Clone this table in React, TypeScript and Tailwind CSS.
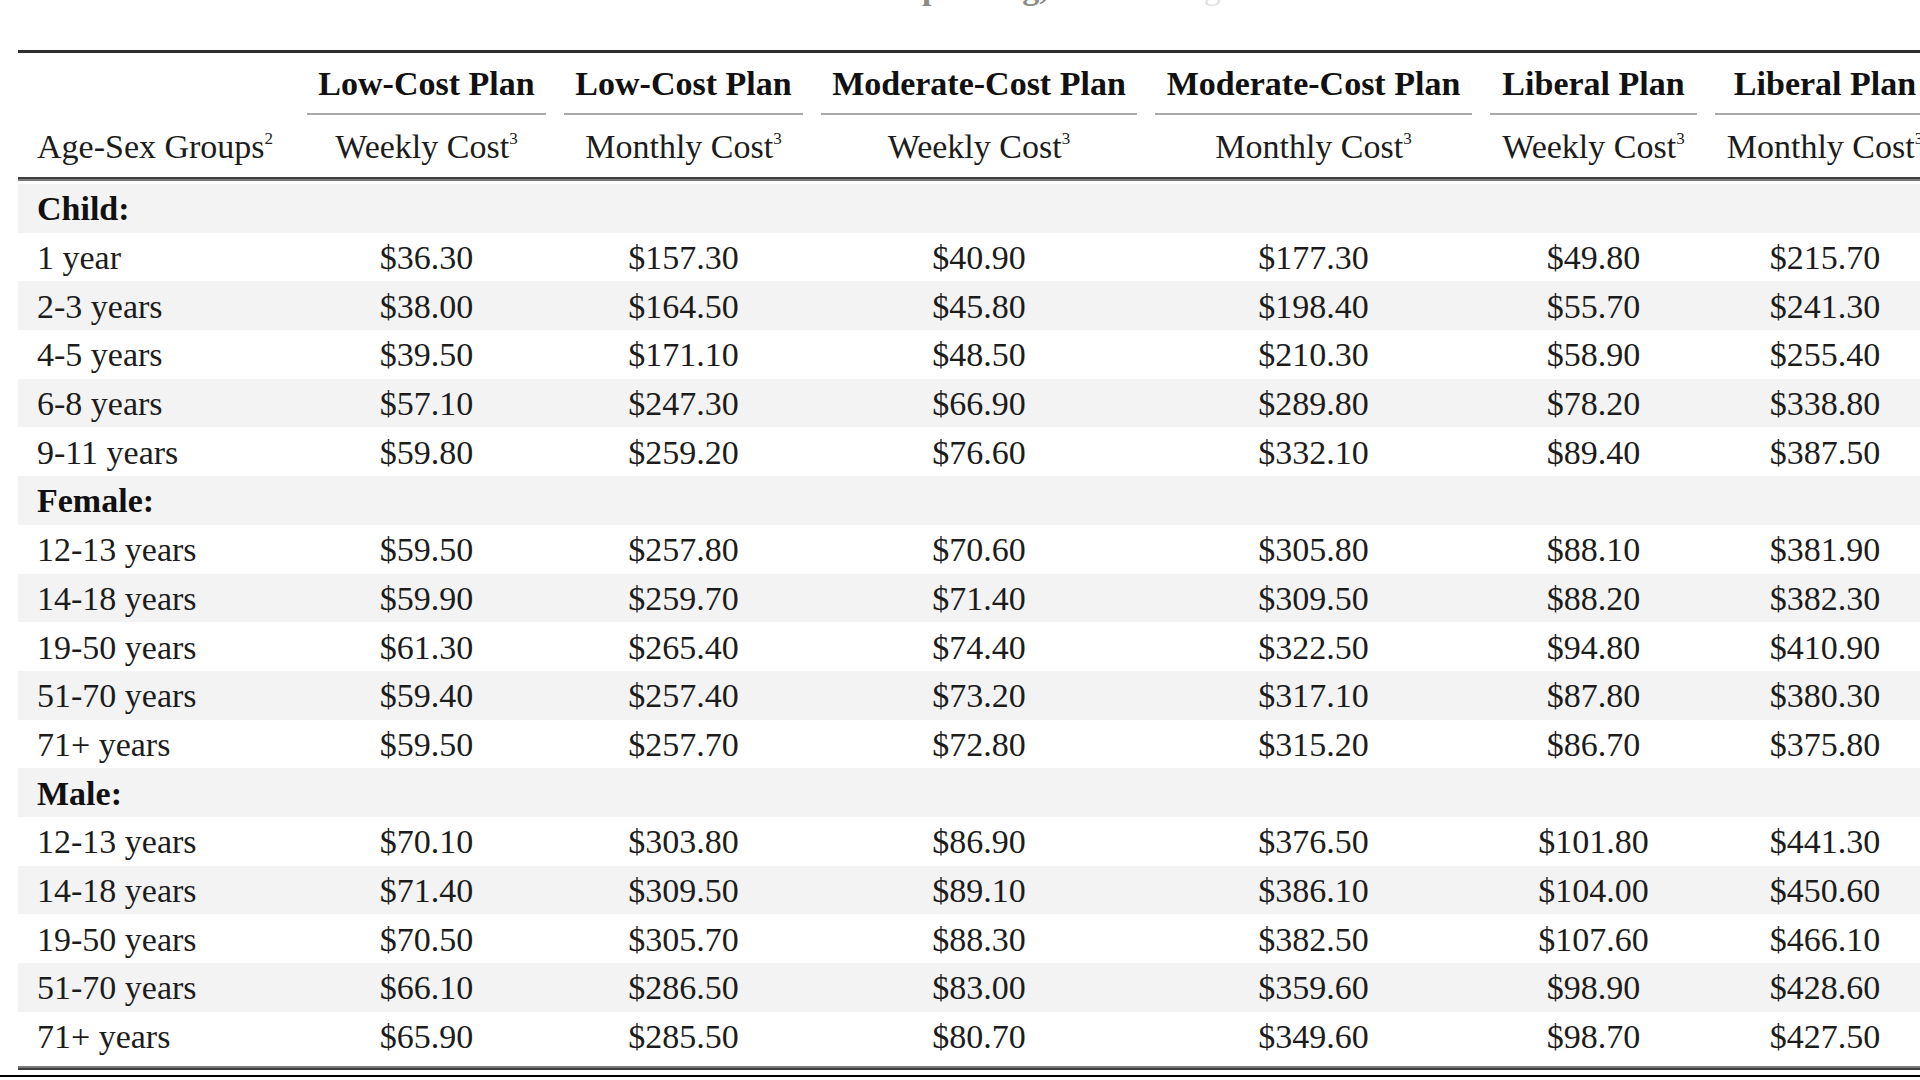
import type { ReactNode } from "react";

type Row =
  | { kind: "group"; label: string }
  | { kind: "data"; label: string; values: string[] };

const GRID = "grid grid-cols-[280px_257px_257px_334px_335px_225px_238px]";

const PLANS = [
  "Low-Cost Plan",
  "Low-Cost Plan",
  "Moderate-Cost Plan",
  "Moderate-Cost Plan",
  "Liberal Plan",
  "Liberal Plan",
];

const PERIODS = ["Weekly Cost", "Monthly Cost", "Weekly Cost", "Monthly Cost", "Weekly Cost", "Monthly Cost"];

const d = (label: string, ...nums: number[]): Row => ({
  kind: "data",
  label,
  values: nums.map((n) => `$${n.toFixed(2)}`),
});
const g = (label: string): Row => ({ kind: "group", label });

const ROWS: Row[] = [
  g("Child:"),
  d("1 year", 36.3, 157.3, 40.9, 177.3, 49.8, 215.7),
  d("2-3 years", 38.0, 164.5, 45.8, 198.4, 55.7, 241.3),
  d("4-5 years", 39.5, 171.1, 48.5, 210.3, 58.9, 255.4),
  d("6-8 years", 57.1, 247.3, 66.9, 289.8, 78.2, 338.8),
  d("9-11 years", 59.8, 259.2, 76.6, 332.1, 89.4, 387.5),
  g("Female:"),
  d("12-13 years", 59.5, 257.8, 70.6, 305.8, 88.1, 381.9),
  d("14-18 years", 59.9, 259.7, 71.4, 309.5, 88.2, 382.3),
  d("19-50 years", 61.3, 265.4, 74.4, 322.5, 94.8, 410.9),
  d("51-70 years", 59.4, 257.4, 73.2, 317.1, 87.8, 380.3),
  d("71+ years", 59.5, 257.7, 72.8, 315.2, 86.7, 375.8),
  g("Male:"),
  d("12-13 years", 70.1, 303.8, 86.9, 376.5, 101.8, 441.3),
  d("14-18 years", 71.4, 309.5, 89.1, 386.1, 104.0, 450.6),
  d("19-50 years", 70.5, 305.7, 88.3, 382.5, 107.6, 466.1),
  d("51-70 years", 66.1, 286.5, 83.0, 359.6, 98.9, 428.6),
  d("71+ years", 65.9, 285.5, 80.7, 349.6, 98.7, 427.5),
];

function Note({ n }: { n: ReactNode }) {
  return <sup className="-top-[14px] text-[17px]">{n}</sup>;
}

function PlanHeader() {
  return (
    <div className={`${GRID} h-[62px]`}>
      <div />
      {PLANS.map((p, i) => (
        <div key={i} className="px-[9px]">
          <div className="flex h-full items-center justify-center whitespace-nowrap border-b-2 border-[#a9a9a9] pt-[2px] font-bold text-[#111]">
            {p}
          </div>
        </div>
      ))}
    </div>
  );
}

function PeriodHeader() {
  return (
    <div className={`${GRID} h-[62px] items-center pt-[2px] text-[#1c1c1c]`}>
      <div className="whitespace-nowrap pl-[19px]">
        Age-Sex Groups<Note n="2" />
      </div>
      {PERIODS.map((p, i) => (
        <div key={i} className="whitespace-nowrap text-center">
          {p}
          <Note n="3" />
        </div>
      ))}
    </div>
  );
}

function BodyRow({ row, shaded }: { row: Row; shaded: boolean }) {
  const bg = shaded ? "bg-[#f3f3f3]" : "bg-white";
  if (row.kind === "group") {
    return (
      <div className={`${GRID} h-[48.7px] items-center pt-[2px] ${bg}`}>
        <div className="pl-[19px] font-bold text-[#111]">{row.label}</div>
      </div>
    );
  }
  return (
    <div className={`${GRID} h-[48.7px] items-center pt-[2px] ${bg} text-[#1c1c1c]`}>
      <div className="whitespace-nowrap pl-[19px]">{row.label}</div>
      {row.values.map((v, i) => (
        <div key={i} className="text-center">
          {v}
        </div>
      ))}
    </div>
  );
}

export default function App() {
  return (
    <div className="h-[1080px] w-[1920px] overflow-hidden bg-white font-['Liberation_Serif','Times_New_Roman',serif] text-[34px] leading-none">
      <div className="h-[50px] overflow-hidden">
        <div className="-mt-[29px] text-center text-[34px] leading-[34px] text-[#e2e2e2]">
          Cost of Food at <span className="font-bold text-[#8a8a8a]">Spending,</span> U.S. Average
        </div>
      </div>
      <div className="ml-[18px] w-[1926px]">
        <div className="h-[3px] bg-[#2e2e2e]" />
        <PlanHeader />
        <PeriodHeader />
        <div className="h-[4px] border-t-2 border-[#3e3e3e] bg-[#7a7a7a]" />
        <div className="mt-[3px]">
          {ROWS.map((r, i) => (
            <BodyRow key={i} row={r} shaded={i % 2 === 0} />
          ))}
        </div>
        <div className="mt-[6px] h-[4px] border-b-2 border-[#3e3e3e] bg-[#7a7a7a]" />
      </div>
      <div className="mt-[5px] h-[2px] bg-black" />
    </div>
  );
}
